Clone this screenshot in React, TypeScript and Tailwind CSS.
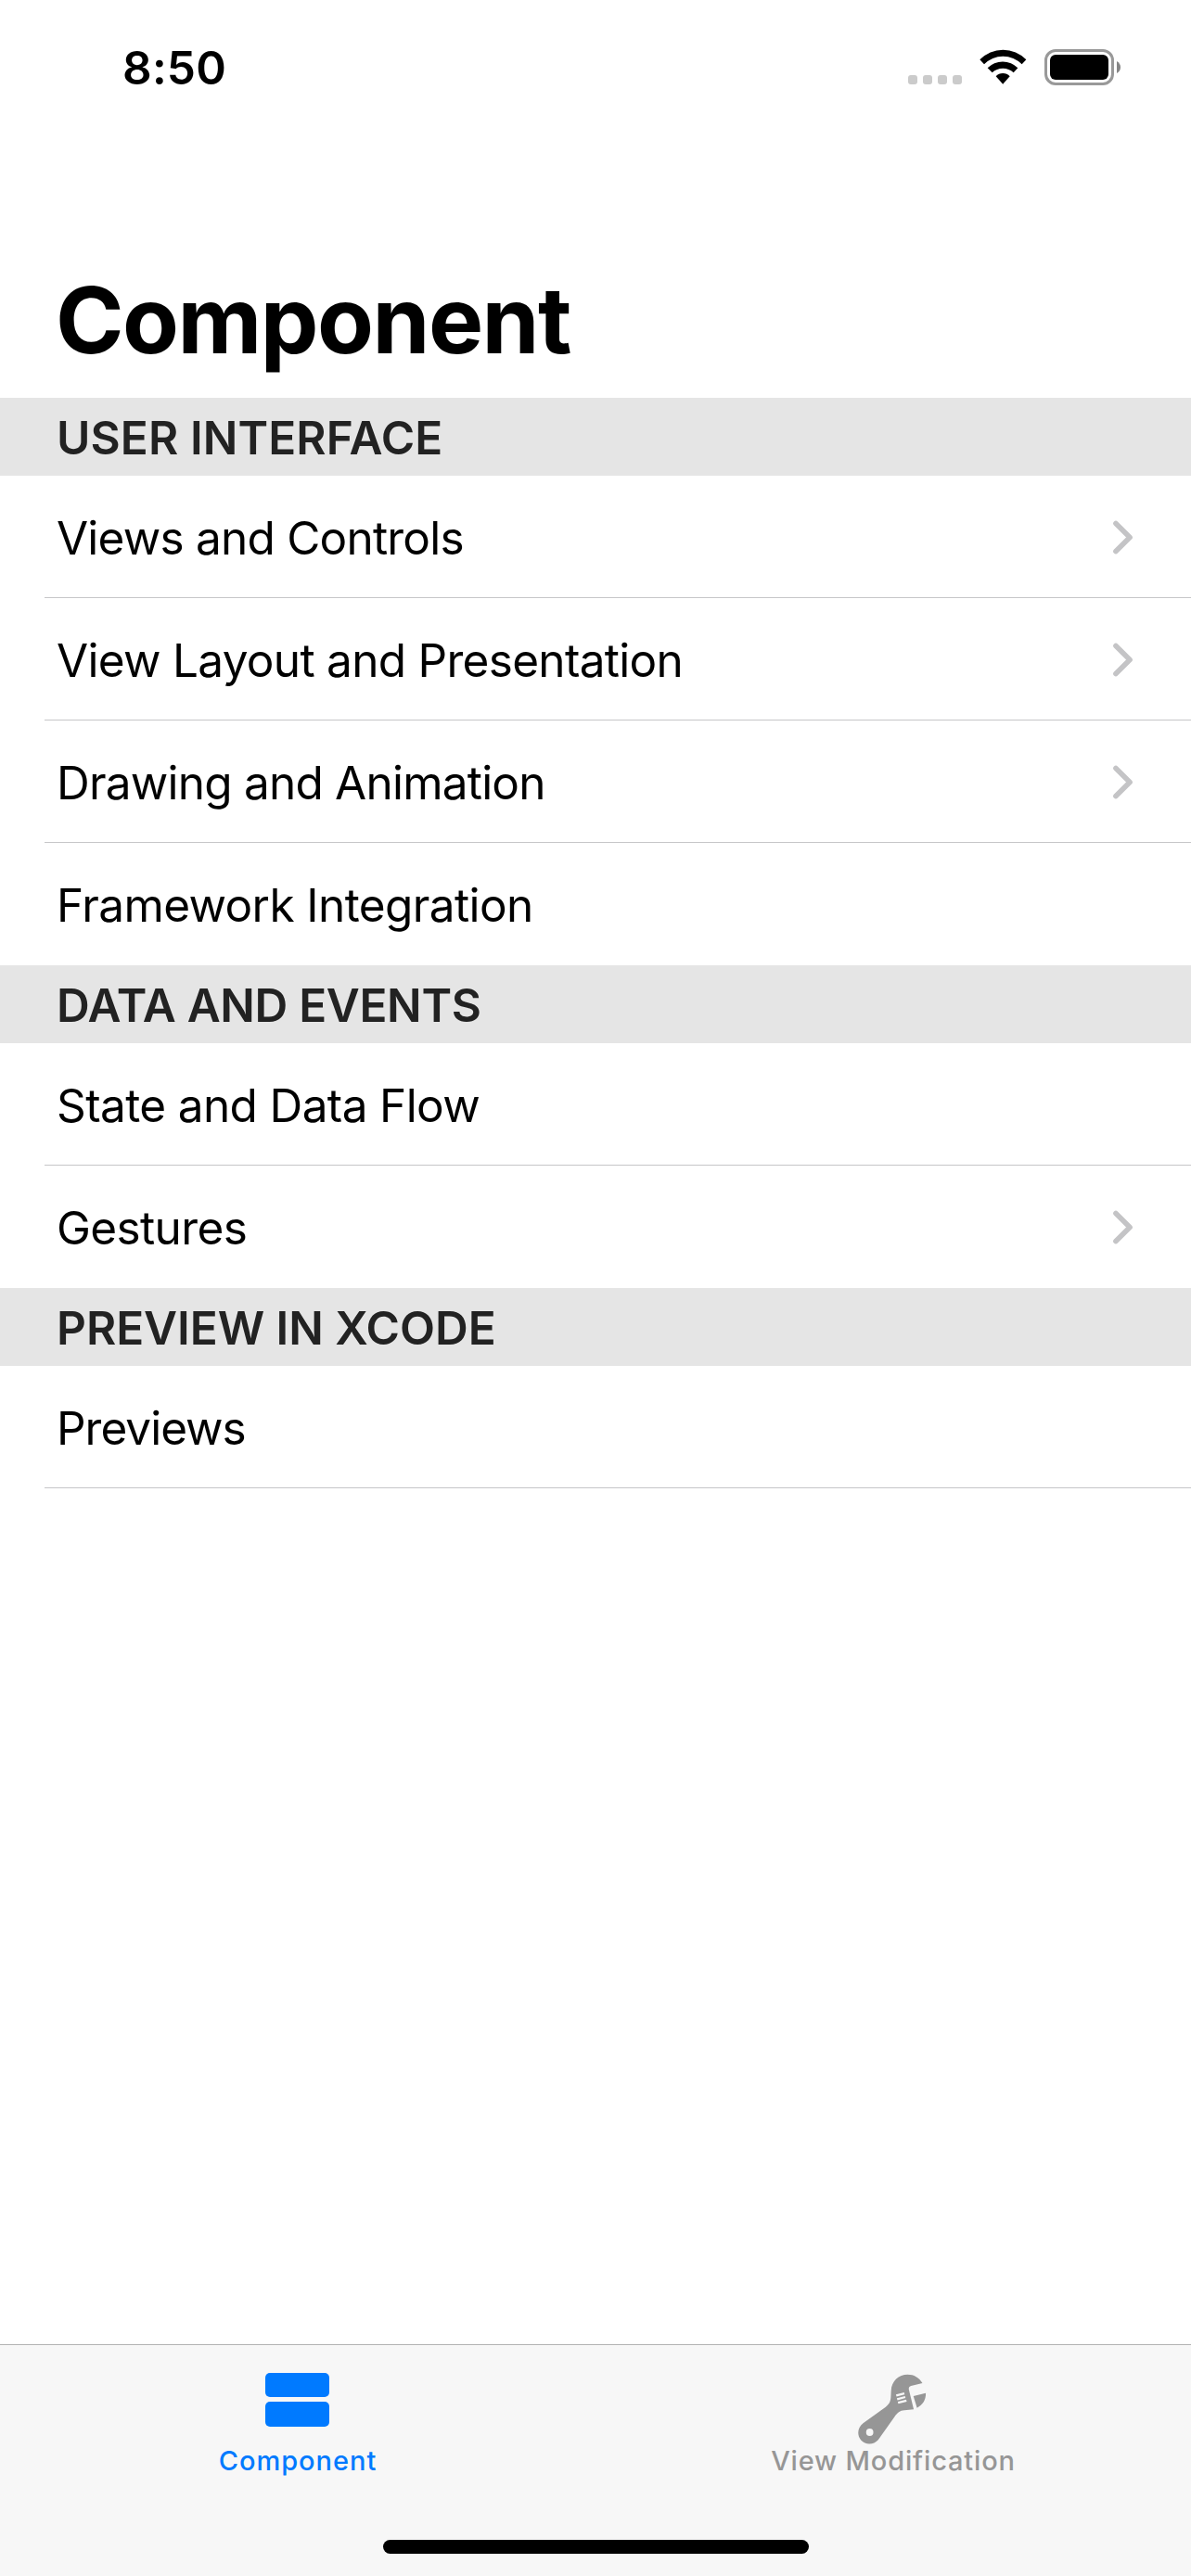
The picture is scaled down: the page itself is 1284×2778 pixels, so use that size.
import type { ReactNode } from 'react';

type Row = { label: string; tracking: string; link?: boolean };
type Section = { title: string; tracking: string; rows: Row[]; closed?: boolean };

const sections: Section[] = [
  {
    title: 'USER INTERFACE',
    tracking: 'tracking-[0.12px]',
    rows: [
      { label: 'Views and Controls', tracking: 'tracking-[-0.78px]', link: true },
      { label: 'View Layout and Presentation', tracking: 'tracking-[-0.7px]', link: true },
      { label: 'Drawing and Animation', tracking: 'tracking-[-0.78px]', link: true },
      { label: 'Framework Integration', tracking: 'tracking-[-0.6px]' },
    ],
  },
  {
    title: 'DATA AND EVENTS',
    tracking: 'tracking-[-0.33px]',
    rows: [
      { label: 'State and Data Flow', tracking: 'tracking-[-0.62px]' },
      { label: 'Gestures', tracking: 'tracking-[-0.63px]', link: true },
    ],
  },
  {
    title: 'PREVIEW IN XCODE',
    tracking: 'tracking-[-0.03px]',
    rows: [{ label: 'Previews', tracking: 'tracking-[-1px]' }],
    closed: true,
  },
];

function Chevron() {
  return (
    <svg className="mt-px h-[37px] w-[21px] shrink-0" viewBox="119 62 64 110" fill="none">
      <path d="M128 71 174 117 128 163" stroke="#c4c4c6" strokeWidth="17" strokeLinecap="round" strokeLinejoin="round" />
    </svg>
  );
}

function Wifi() {
  return (
    <svg className="h-[38px] w-[51px]" viewBox="289 70 153 114">
      <path d="M290 104A104 104 0 0 1 440 104L426 119A85 85 0 0 0 304 119Z" />
      <path d="M315 131A68 68 0 0 1 413 131L399 146A50 50 0 0 0 330 146Z" />
      <path d="M342 158A31 31 0 0 1 387 158L364.500 183Z" />
    </svg>
  );
}

function Wrench() {
  return (
    <svg className="mt-px mr-[2px] h-[78px] w-[76px]" viewBox="345 148 228 234" fill="#969696">
      <path d="M559 179C548 160 531 150 510 150C480 150 456 172 455 204L454 226C453 240 449 248 437 258L362 312C343 327 341 352 355 368C371 385 397 384 412 367L466 291C476 277 484 270 499 269L530 266L514 200Q512 190 521 188Z" />
      <path d="M529 222 570 212C571 234 560 251 541 261Z" />
      <circle cx="384" cy="342" r="12" fill="#f7f7f7" />
      <path d="M472 220 499 213M475 232 502 225M478 244 506 237" stroke="#f7f7f7" strokeWidth="7" />
    </svg>
  );
}

function StatusBar() {
  return (
    <header className="flex h-[285px] justify-between pr-[76px] pl-[132px]">
      <div className="mt-[43px] h-[60px] text-[49.5px] leading-[60px] font-semibold tracking-[0.2px]">8:50</div>
      <div className="mt-[53px] flex h-[39px]">
        <div className="mt-[28px] flex gap-1.5">
          {[0, 1, 2, 3].map((i) => (
            <span key={i} className="size-[10px] rounded-[3px] bg-[#cbcbcb]" />
          ))}
        </div>
        <div className="ml-[19px]">
          <Wifi />
        </div>
        <div className="ml-[19px] h-[39px] w-[75px] rounded-[12px] border-3 border-[#999] p-[3px]">
          <div className="h-full rounded-[6px] bg-black" />
        </div>
        <svg className="mt-[13px] ml-[3px] h-[13px] w-1" viewBox="0 0 4 13">
          <path d="M0 0Q4 2.500 4 6.500T0 13Z" fill="#858585" />
        </svg>
      </div>
    </header>
  );
}

function Tab({ label, className, children }: { label: string; className: string; children: ReactNode }) {
  return (
    <div className={`flex flex-1 flex-col items-center ${className}`}>
      <div className="flex h-[107px] flex-col pt-[30px]">{children}</div>
      <span className="text-[29px] leading-9 font-medium">{label}</span>
    </div>
  );
}

export default function App() {
  return (
    <div className="flex h-[2778px] w-[1284px] flex-col bg-white font-['Inter',sans-serif] text-black">
      <StatusBar />
      <h1 className="h-[144px] pl-[60px] text-[99.5px] leading-[120px] font-bold tracking-[-1.54px]">Component</h1>
      <main className="flex-1">
        {sections.map((s) => (
          <section key={s.title}>
            <h2 className={`h-[84px] bg-[#e5e5e5] pt-px pl-[61px] text-[49.5px] leading-[84px] font-semibold text-[#222] ${s.tracking}`}>
              {s.title}
            </h2>
            {s.rows.map((r, i) => (
              <div key={r.label} className="h-[132px] pl-12">
                <div
                  className={`flex h-full items-center justify-between border-b pr-[63px] pl-[13px] ${
                    i < s.rows.length - 1 || s.closed ? 'border-[#c6c6c8]' : 'border-transparent'
                  }`}
                >
                  <span className={`pt-[3px] text-[49.5px] leading-[60px] ${r.tracking}`}>{r.label}</span>
                  {r.link && <Chevron />}
                </div>
              </div>
            ))}
          </section>
        ))}
      </main>
      <nav className="flex h-[250px] flex-col justify-between border-t border-[#b2b2b2] bg-[#f7f7f7] pb-6">
        <div className="flex">
          <Tab label="Component" className="tracking-[0.97px] text-[#007aff]">
            <div className="mr-px flex flex-col gap-[5px]">
              <div className="h-[26px] w-[69px] rounded-[5px] bg-[#007aff]" />
              <div className="h-[27px] w-[69px] rounded-[5px] bg-[#007aff]" />
            </div>
          </Tab>
          <Tab label="View Modification" className="tracking-[0.84px] text-[#969696]">
            <Wrench />
          </Tab>
        </div>
        <div className="mr-[412px] ml-[413px] h-[15px] rounded-full bg-black" />
      </nav>
    </div>
  );
}
